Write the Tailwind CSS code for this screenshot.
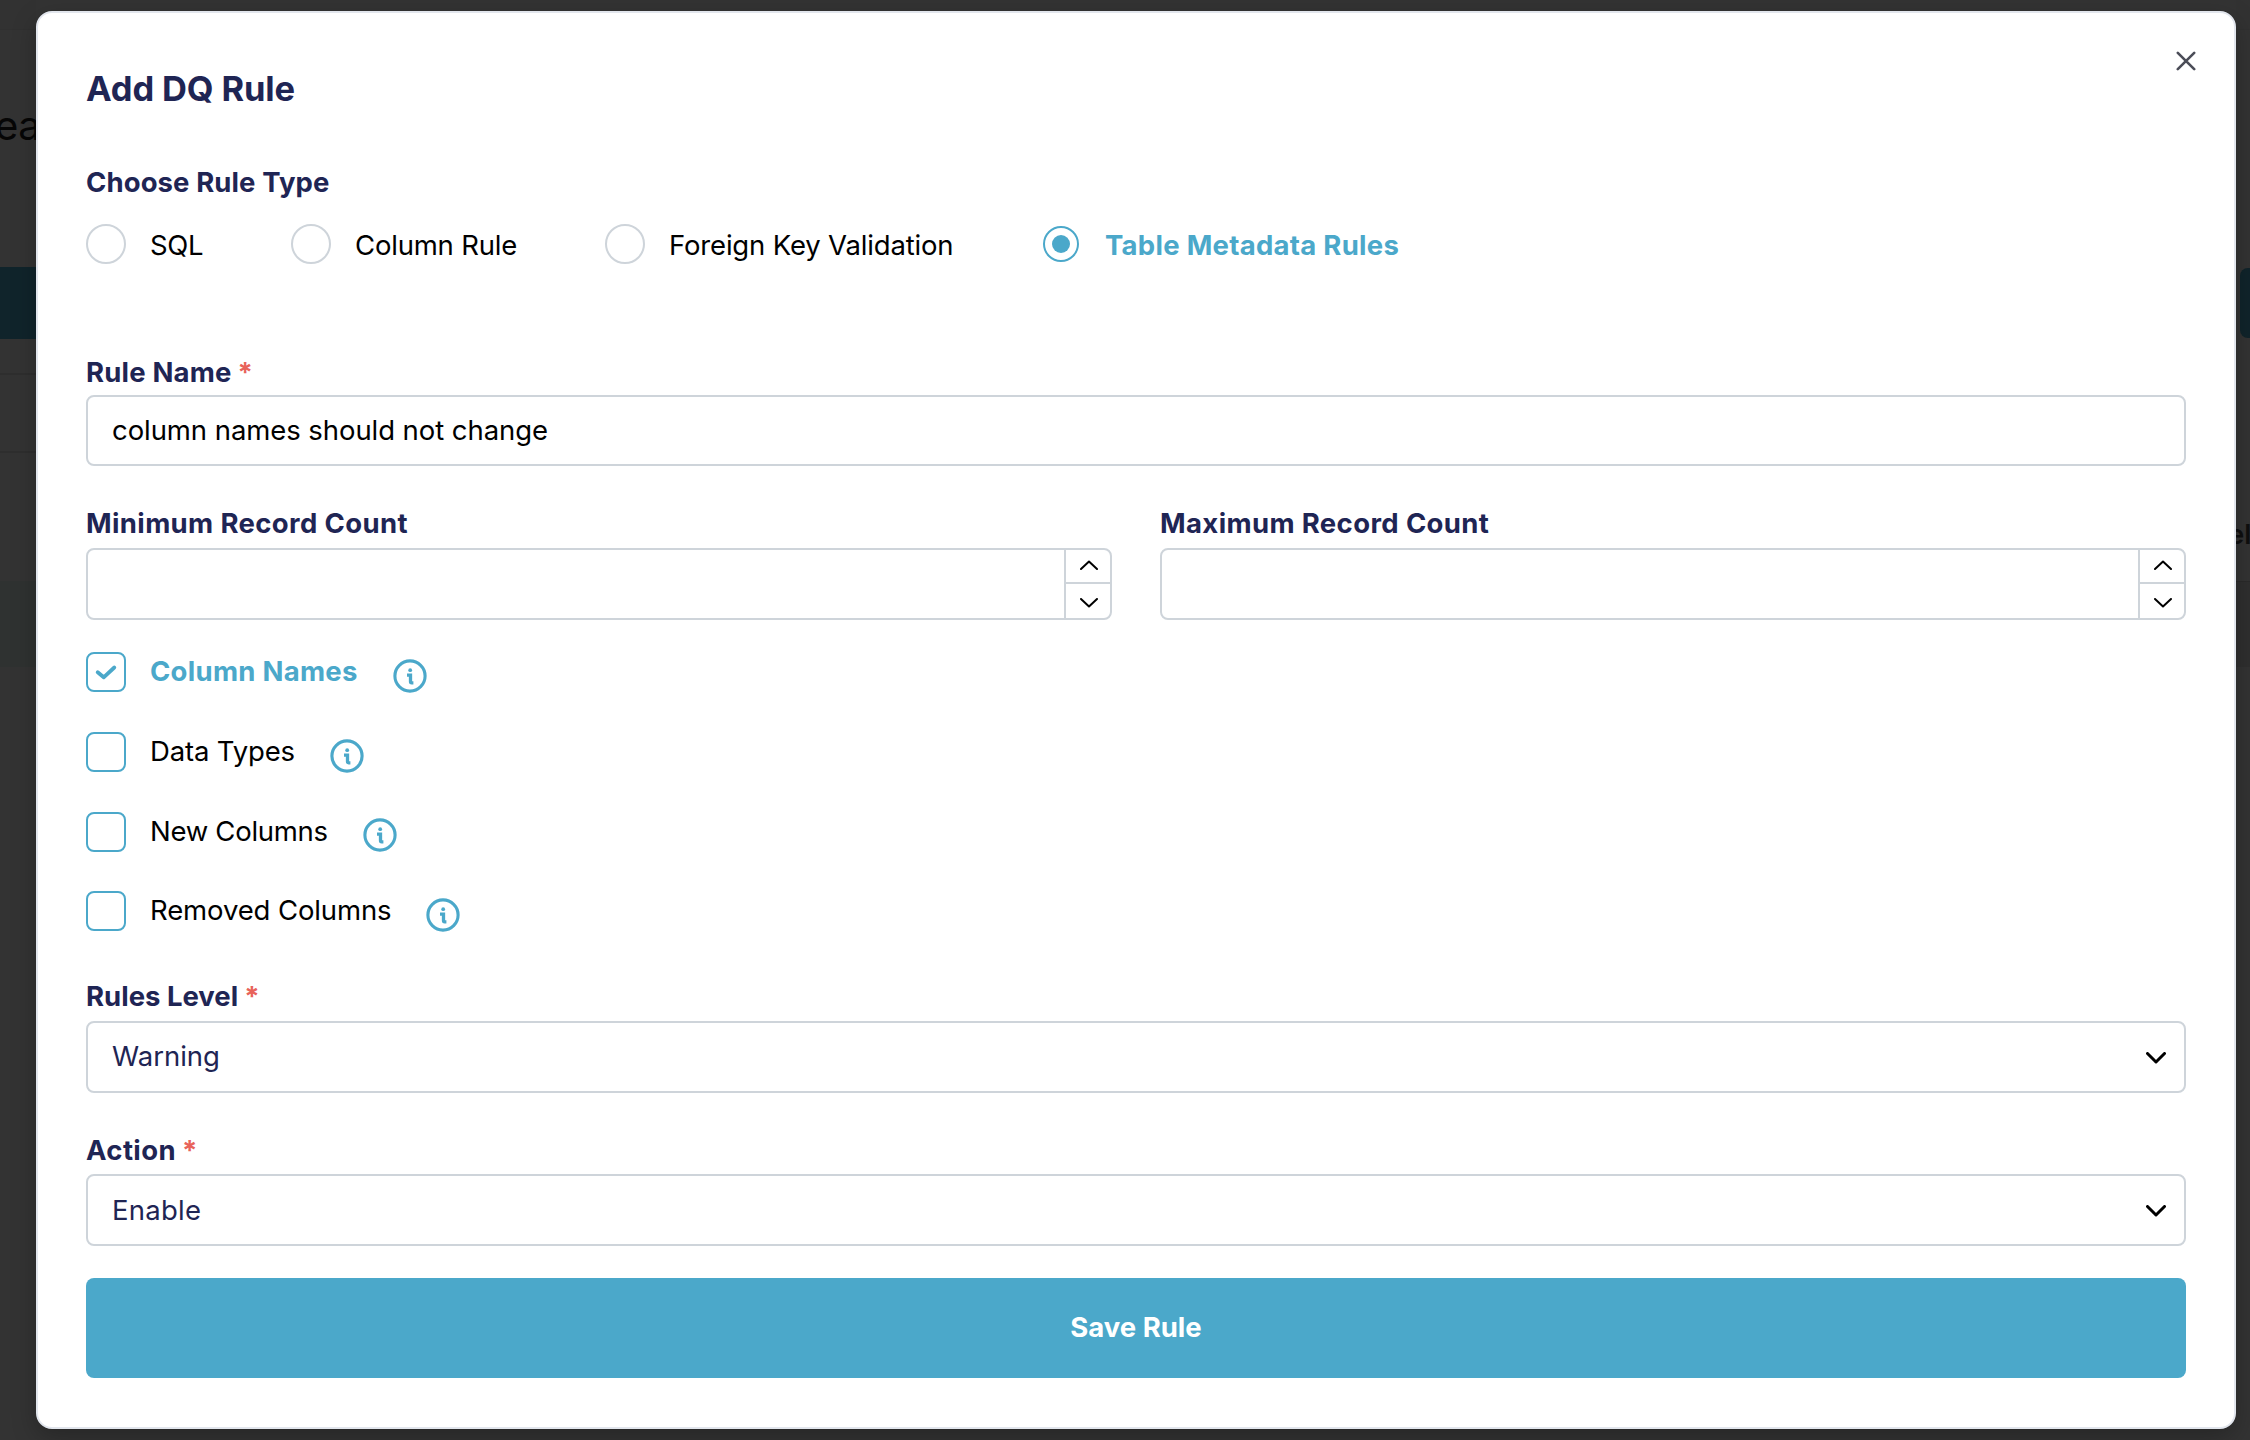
<!DOCTYPE html>
<html lang="en">
<head>
<meta charset="utf-8">
<title>Add DQ Rule</title>
<script src="https://cdn.jsdelivr.net/npm/@tailwindcss/browser@4"></script>
</head>
<body class="h-[1440px] w-[2250px] overflow-hidden bg-[#333333] font-['Inter',sans-serif] text-[27.5px] leading-9 text-black">

<svg class="hidden">
  <symbol id="info" viewBox="0 0 34 34">
    <circle cx="17" cy="17" r="15.1" fill="none" stroke="#4ba8ca" stroke-width="3.1"/>
    <circle cx="17.2" cy="11.2" r="1.9" fill="#4ba8ca"/>
    <path d="M14 16.2H17.5V22.7Q17.5 23.8 18.6 23.8H20.4" fill="none" stroke="#4ba8ca" stroke-width="3.3"/>
  </symbol>
  <symbol id="chevron" viewBox="0 0 20 12"><path d="M1.5 1.5L10 10L18.5 1.5" fill="none" stroke="currentColor" stroke-width="3" stroke-linecap="round" stroke-linejoin="round"/></symbol>
  <symbol id="step" viewBox="0 0 18 10"><path d="M1 1L9 8.4L17 1" fill="none" stroke="currentColor" stroke-width="2" stroke-linecap="round" stroke-linejoin="round"/></symbol>
</svg>

<!-- Dimmed page behind the dialog -->
<div class="flex h-full justify-between">
  <div class="flex w-9 flex-col overflow-hidden">
    <div class="h-[30px] shrink-0 border-b border-[#303030] bg-[#323232]"></div>
    <div class="mt-[101px] -ml-[5px] h-0 text-[40px] leading-[0px] tracking-[-0.5px] whitespace-nowrap text-[#060606]"><span class="inline-block translate-y-[-5px]">ea</span></div>
    <div class="mt-[136px] h-[72px] shrink-0 bg-[#10242b]"></div>
    <div class="mt-[34px] h-0.5 shrink-0 bg-[#2e2e2e]"></div>
    <div class="mt-[76px] h-0.5 shrink-0 bg-[#2e2e2e]"></div>
    <div class="mt-[128px] h-[86px] shrink-0 bg-[#2f3231]"></div>
  </div>
  <div class="flex w-3.5 flex-col overflow-hidden">
    <div class="h-[30px] shrink-0 border-b border-[#303030] bg-[#323232]"></div>
    <div class="mt-[238px] ml-1 h-[70px] w-6 shrink-0 rounded-lg bg-[#10242b]"></div>
    <div class="mt-[178px] -ml-2 h-9 font-semibold whitespace-nowrap text-[#0f0f0f]">el</div>
    <div class="mt-[29px] h-[86px] shrink-0 border-t border-[#2a2a2a] bg-[#2f2f2f]"></div>
  </div>
</div>

<!-- Dialog -->
<main class="absolute top-[11px] left-9 flex h-[1418px] w-[2200px] flex-col rounded-2xl border-2 border-[#e2e6ed] bg-white px-12 shadow-[0_8px_24px_rgba(0,0,0,0.25)]">
  <button class="absolute top-[38px] right-[38px]" aria-label="Close">
    <svg class="block h-5 w-5" viewBox="0 0 20 20"><path d="M1.8 1.8L18.2 18.2M18.2 1.8L1.8 18.2" stroke="#4b4d58" stroke-width="2.6" stroke-linecap="round"/></svg>
  </button>

  <h1 class="mt-[54px] h-11 text-[34.5px] leading-[44px] font-[650] tracking-[-0.15px] text-[#1f2554]">Add DQ Rule</h1>

  <h2 class="mt-[53px] font-[650] tracking-[0.1px] text-[#1f2554]">Choose Rule Type</h2>
  <div class="mt-6 grid h-10 grid-cols-[205px_314px_438px_auto]">
    <label class="flex items-center gap-6"><span class="h-10 w-10 rounded-full border-2 border-[#ced4da]"></span><span class="mt-0.5 tracking-[-0.3px]">SQL</span></label>
    <label class="flex items-center gap-6"><span class="h-10 w-10 rounded-full border-2 border-[#ced4da]"></span><span class="mt-0.5 tracking-[-0.2px]">Column Rule</span></label>
    <label class="flex items-center gap-6"><span class="h-10 w-10 rounded-full border-2 border-[#ced4da]"></span><span class="mt-0.5 tracking-[-0.17px]">Foreign Key Validation</span></label>
    <label class="flex items-center gap-[26px]"><span class="flex h-9 w-9 items-center justify-center rounded-full border-2 border-[#4ba8ca]"><span class="h-[18px] w-[18px] rounded-full bg-[#4ba8ca]"></span></span><span class="mt-0.5 font-[650] tracking-[0.28px] text-[#4ba8ca]">Table Metadata Rules</span></label>
  </div>

  <div class="mt-[90px] flex gap-1.5 font-[650] text-[#1f2554]"><span class="tracking-[0.18px]">Rule Name</span><span class="text-[#e8635a]">*</span></div>
  <div class="mt-[5px] flex h-[71px] items-center rounded-lg border-2 border-[#ced4da] px-6 pb-0.5 tracking-[-0.07px]">column names should not change</div>

  <div class="mt-[39px] grid grid-cols-2 gap-x-12">
    <div>
      <div class="font-[650] tracking-[0.37px] text-[#1f2554]">Minimum Record Count</div>
      <div class="mt-[7px] flex h-[72px] justify-end rounded-lg border-2 border-[#ced4da]">
        <div class="flex w-[46px] flex-col border-l-2 border-[#ced4da]">
          <button class="flex h-[34px] items-center justify-center border-b-2 border-[#ced4da] pt-px pl-px"><svg class="-mt-1 h-2.5 w-[18px] rotate-180"><use href="#step"/></svg></button>
          <button class="flex flex-1 items-center justify-center pt-[3px] pl-px"><svg class="h-2.5 w-[18px]"><use href="#step"/></svg></button>
        </div>
      </div>
    </div>
    <div>
      <div class="font-[650] tracking-[0.37px] text-[#1f2554]">Maximum Record Count</div>
      <div class="mt-[7px] flex h-[72px] justify-end rounded-lg border-2 border-[#ced4da]">
        <div class="flex w-[46px] flex-col border-l-2 border-[#ced4da]">
          <button class="flex h-[34px] items-center justify-center border-b-2 border-[#ced4da] pt-px pl-px"><svg class="-mt-1 h-2.5 w-[18px] rotate-180"><use href="#step"/></svg></button>
          <button class="flex flex-1 items-center justify-center pt-[3px] pl-px"><svg class="h-2.5 w-[18px]"><use href="#step"/></svg></button>
        </div>
      </div>
    </div>
  </div>

  <div class="mt-8 flex h-10 items-center">
    <span class="h-10 w-10 rounded-lg border-2 border-[#4ba8ca]"><svg class="h-9 w-9" viewBox="2 2 36 36"><path d="M11.7 20.3L17.7 25.3L28.3 15.5" fill="none" stroke="#4ba8ca" stroke-width="3.8" stroke-linecap="round" stroke-linejoin="round"/></svg></span>
    <span class="mb-0.5 ml-6 font-[650] tracking-[0.28px] text-[#4ba8ca]">Column Names</span>
    <svg class="mt-[7px] ml-[35px] h-[34px] w-[34px]"><use href="#info"/></svg>
  </div>
  <div class="mt-10 flex h-10 items-center">
    <span class="h-10 w-10 rounded-lg border-2 border-[#4ba8ca]"></span>
    <span class="mb-0.5 ml-6 tracking-[-0.15px]">Data Types</span>
    <svg class="mt-[7px] ml-[35px] h-[34px] w-[34px]"><use href="#info"/></svg>
  </div>
  <div class="mt-10 flex h-10 items-center">
    <span class="h-10 w-10 rounded-lg border-2 border-[#4ba8ca]"></span>
    <span class="mb-0.5 ml-6 tracking-[-0.28px]">New Columns</span>
    <svg class="mt-[6px] ml-[35px] h-[34px] w-[34px]"><use href="#info"/></svg>
  </div>
  <div class="mt-[39px] flex h-10 items-center">
    <span class="h-10 w-10 rounded-lg border-2 border-[#4ba8ca]"></span>
    <span class="mb-0.5 ml-6 tracking-[-0.12px]">Removed Columns</span>
    <svg class="mt-[7px] ml-[35px] h-[34px] w-[34px]"><use href="#info"/></svg>
  </div>

  <div class="mt-[47px] flex gap-1.5 font-[650] text-[#1f2554]"><span>Rules Level</span><span class="text-[#e8635a]">*</span></div>
  <div class="mt-[7px] flex h-[72px] items-center justify-between rounded-lg border-2 border-[#ced4da] pr-[18px] pb-0.5 pl-6 text-[#1f2554]">Warning<svg class="mt-1 h-3 w-5 text-black"><use href="#chevron"/></svg></div>

  <div class="mt-[39px] flex gap-1.5 font-[650] text-[#1f2554]"><span class="tracking-[0.4px]">Action</span><span class="text-[#e8635a]">*</span></div>
  <div class="mt-[6px] flex h-[72px] items-center justify-between rounded-lg border-2 border-[#ced4da] pr-[18px] pl-6 tracking-[0.25px] text-[#1f2554]">Enable<svg class="mt-0.5 h-3 w-5 text-black"><use href="#chevron"/></svg></div>

  <button class="mt-8 flex h-[100px] items-center justify-center rounded-lg bg-[#4ba8ca] pb-0.5 font-[650] text-white">Save Rule</button>
</main>
</body>
</html>
